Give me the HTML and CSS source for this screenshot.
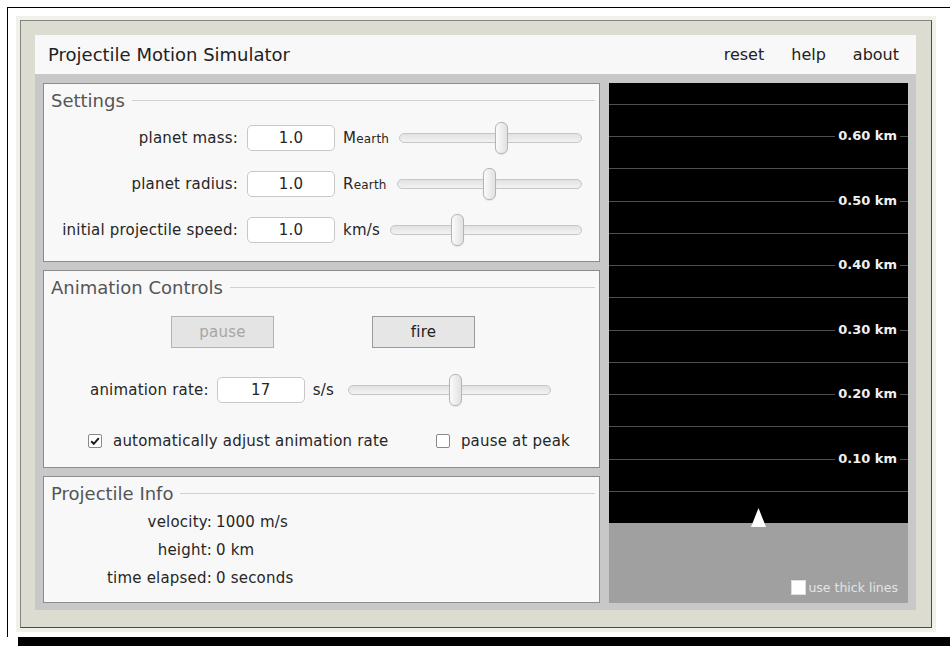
FILE: index.html
```html
<!DOCTYPE html>
<html lang="en">
<head>
<meta charset="utf-8">
<title>Projectile Motion Simulator</title>
<link rel="stylesheet" href="styles.css">
</head>
<body>
<div class="page">
  <div class="frame">
    <header class="topbar">
      <div class="title">Projectile Motion Simulator</div>
      <nav class="links">
        <a href="#">reset</a>
        <a href="#">help</a>
        <a href="#">about</a>
      </nav>
    </header>

    <div class="stage">
      <div class="controls">
        <section class="panel settings">
          <div class="legend">Settings</div>
          <div class="row">
            <span class="row-label">planet mass:</span>
            <div class="field">1.0</div>
            <span class="unit">M<small>earth</small></span>
            <div class="slider"><div class="track"></div><div class="thumb" style="--p:0.567"></div></div>
          </div>
          <div class="row">
            <span class="row-label">planet radius:</span>
            <div class="field">1.0</div>
            <span class="unit">R<small>earth</small></span>
            <div class="slider"><div class="track"></div><div class="thumb" style="--p:0.503"></div></div>
          </div>
          <div class="row">
            <span class="row-label">initial projectile speed:</span>
            <div class="field">1.0</div>
            <span class="unit">km/s</span>
            <div class="slider"><div class="track"></div><div class="thumb" style="--p:0.343"></div></div>
          </div>
        </section>

        <section class="panel animation">
          <div class="legend">Animation Controls</div>
          <div class="buttons">
            <div class="btn disabled">pause</div>
            <div class="btn">fire</div>
          </div>
          <div class="rate-row">
            <span class="rate-label">animation rate:</span>
            <div class="field">17</div>
            <span class="unit">s/s</span>
            <div class="slider rate-slider"><div class="track"></div><div class="thumb" style="--p:0.529"></div></div>
          </div>
          <div class="check-row">
            <label class="check">
              <span class="box">
                <svg width="12" height="12" viewBox="0 0 12 12"><path d="M2.2 6.2 L4.8 8.8 L9.8 3.2" fill="none" stroke="#1e1e1e" stroke-width="2"/></svg>
              </span>
              automatically adjust animation rate
            </label>
            <label class="check">
              <span class="box"></span>
              pause at peak
            </label>
          </div>
        </section>

        <section class="panel info">
          <div class="legend">Projectile Info</div>
          <div class="info-grid">
            <span class="info-label">velocity:</span><span>1000 m/s</span>
            <span class="info-label">height:</span><span>0 km</span>
            <span class="info-label">time elapsed:</span><span>0 seconds</span>
          </div>
        </section>
      </div>

      <div class="view">
        <svg class="sky" width="299" height="520" viewBox="0 0 299 520">
          <rect x="0" y="0" width="299" height="440" fill="#000"/>
          <rect x="0" y="440" width="299" height="80" fill="#a0a0a0"/>
          <g stroke="#4e4e4e" stroke-width="1">
            <line x1="0" x2="299" y1="21.5" y2="21.5"/>
            <line x1="0" x2="299" y1="53.5" y2="53.5"/>
            <line x1="0" x2="299" y1="85.5" y2="85.5"/>
            <line x1="0" x2="299" y1="118.5" y2="118.5"/>
            <line x1="0" x2="299" y1="150.5" y2="150.5"/>
            <line x1="0" x2="299" y1="182.5" y2="182.5"/>
            <line x1="0" x2="299" y1="214.5" y2="214.5"/>
            <line x1="0" x2="299" y1="247.5" y2="247.5"/>
            <line x1="0" x2="299" y1="279.5" y2="279.5"/>
            <line x1="0" x2="299" y1="311.5" y2="311.5"/>
            <line x1="0" x2="299" y1="343.5" y2="343.5"/>
            <line x1="0" x2="299" y1="376.5" y2="376.5"/>
            <line x1="0" x2="299" y1="408.5" y2="408.5"/>
          </g>
          <polygon points="149.5,425 142,444 157,444" fill="#fff"/>
        </svg>
        <div class="tick" style="top:53px">0.60 km</div>
        <div class="tick" style="top:118px">0.50 km</div>
        <div class="tick" style="top:182px">0.40 km</div>
        <div class="tick" style="top:247px">0.30 km</div>
        <div class="tick" style="top:311px">0.20 km</div>
        <div class="tick" style="top:376px">0.10 km</div>
        <label class="thick"><span class="thick-box"></span>use thick lines</label>
      </div>
    </div>
  </div>
</div>
<div class="band"></div>
</body>
</html>
```

FILE: styles.css
```css
* {
  box-sizing: border-box;
}

body {
  margin: 0;
  background: #fff;
  font-family: "DejaVu Sans", Verdana, sans-serif;
  color: #262626;
}

/* white sheet with its thin black edge */
.page {
  margin: 7px 0 0 7px;
  border-top: 1px solid #000;
  border-left: 1px solid #000;
  padding: 12px 0 9px 12px;
}

.band {
  margin-left: 18px;
  height: 9px;
  background: #000;
}

/* beige application frame */
.frame {
  width: 912px;
  height: 608px;
  background: #dcdcd0;
  border: 1px solid;
  border-color: #85857f #4a4a47 #4a4a47 #85857f;
  box-shadow: 0 0 0 4px #f1f1ec;
  padding: 14px 15px 17px 14px;
}

.topbar {
  height: 39px;
  background: #f8f8f8;
  display: flex;
  align-items: center;
  justify-content: space-between;
  padding: 0 17px 0 13px;
}

.title {
  font-size: 18px;
  color: #222;
}

.links {
  display: flex;
  gap: 27px;
  font-size: 16px;
}

.links a {
  color: #222;
  text-decoration: none;
}

.stage {
  height: 536px;
  background: #c8c8c8;
  display: flex;
  gap: 9px;
  padding: 9px 8px 7px 8px;
}

.controls {
  width: 557px;
  display: flex;
  flex-direction: column;
  gap: 8px;
}

/* fieldset-like panels */
.panel {
  background: #f8f8f8;
  border: 1px solid #8c8c8c;
  padding: 5px 4px 0 7px;
  font-size: 15px;
  letter-spacing: 0.2px;
}

.legend {
  display: flex;
  align-items: center;
  height: 22px;
  font-size: 18px;
  color: #555;
  gap: 7px;
  letter-spacing: 0;
}

.legend::after {
  content: "";
  flex: 1;
  height: 1px;
  background: #d0d0d0;
}

/* settings */
.settings {
  height: 179px;
}

.row {
  display: flex;
  align-items: center;
  height: 26px;
  margin-top: 20px;
}

.legend + .row {
  margin-top: 14px;
}

.row-label {
  width: 187px;
  text-align: right;
  margin-right: 9px;
  white-space: nowrap;
}

.field {
  width: 88px;
  height: 26px;
  border: 1px solid #c8c8c8;
  border-radius: 5px;
  background: #fff;
  display: flex;
  align-items: center;
  justify-content: center;
  flex: none;
}

.unit {
  margin-left: 8px;
  white-space: nowrap;
}

.unit small {
  font-size: 12px;
}

.slider {
  position: relative;
  flex: 1;
  height: 26px;
  margin-left: 10px;
  margin-right: 13px;
}

.track {
  position: absolute;
  left: 0;
  right: 0;
  top: 50%;
  height: 10px;
  margin-top: -5px;
  border: 1px solid #c6c6c6;
  border-radius: 5px;
  background: linear-gradient(#e2e2e2, #f2f2f2);
}

.thumb {
  position: absolute;
  top: 50%;
  width: 13px;
  height: 32px;
  margin-top: -16px;
  left: calc(var(--p) * (100% - 13px));
  border: 1px solid #b5b5b5;
  border-radius: 6px;
  background: linear-gradient(to right, #fbfbfb, #e1e1e1);
  box-shadow: 0 1px 1px rgba(0, 0, 0, 0.08);
}

/* animation controls */
.animation {
  height: 198px;
}

.buttons {
  display: flex;
  justify-content: center;
  gap: 98px;
  margin-top: 18px;
}

.btn {
  width: 103px;
  height: 32px;
  border: 1px solid #9a9a9a;
  background: #e6e6e6;
  display: flex;
  align-items: center;
  justify-content: center;
  color: #222;
}

.btn.disabled {
  color: #a6a6a6;
  border-color: #b2b2b2;
  background: #e4e4e4;
}

.rate-row {
  display: flex;
  align-items: center;
  height: 26px;
  margin-top: 29px;
  padding-left: 39px;
}

.rate-label {
  margin-right: 8px;
}

.rate-slider {
  flex: none;
  width: 203px;
  margin-left: 14px;
}

.check-row {
  display: flex;
  justify-content: space-between;
  align-items: center;
  height: 18px;
  margin-top: 29px;
  padding: 0 25px 0 37px;
}

.check {
  display: flex;
  align-items: center;
}

.box {
  width: 14px;
  height: 14px;
  border: 1px solid #8a8a8a;
  border-radius: 2px;
  background: #fff;
  margin-right: 11px;
  display: flex;
  align-items: center;
  justify-content: center;
}

/* projectile info */
.info {
  height: 127px;
}

.info-grid {
  display: grid;
  grid-template-columns: 161px auto;
  column-gap: 4px;
  line-height: 28px;
  margin-top: 4px;
}

.info-label {
  text-align: right;
}

/* simulation view */
.view {
  position: relative;
  width: 299px;
  height: 520px;
  background: #a0a0a0;
  flex: none;
}

.sky {
  display: block;
}

.tick {
  position: absolute;
  right: 8px;
  height: 16px;
  line-height: 16px;
  margin-top: -8px;
  padding: 0 3px;
  background: #000;
  color: #f0f0f0;
  font-weight: bold;
  font-size: 13px;
}

.thick {
  position: absolute;
  right: 10px;
  bottom: 8px;
  display: flex;
  align-items: center;
  gap: 2px;
  font-size: 12.5px;
  color: #e4e4e4;
}

.thick-box {
  width: 15px;
  height: 15px;
  background: #fff;
  border: 1px solid #dedede;
}
```
